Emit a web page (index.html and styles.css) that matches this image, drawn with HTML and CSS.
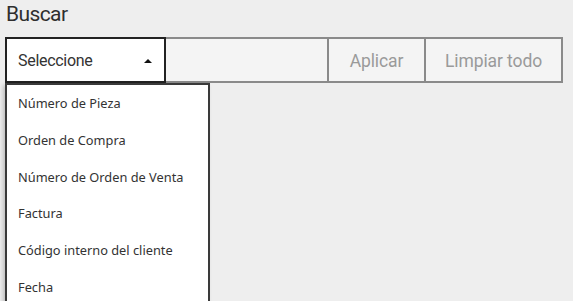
FILE: index.html
```html
<!DOCTYPE html>
<html lang="es">
<head>
<meta charset="utf-8">
<title>Buscar</title>
<link rel="stylesheet" href="styles.css">
</head>
<body>
<div class="page">
  <h1 class="title">Buscar</h1>
  <div class="bar">
    <div class="select-wrap">
      <div class="select">
        <span class="select-label">Seleccione</span>
        <span class="arrow"></span>
      </div>
      <ul class="menu">
        <li>Número de Pieza</li>
        <li>Orden de Compra</li>
        <li>Número de Orden de Venta</li>
        <li>Factura</li>
        <li>Código interno del cliente</li>
        <li>Fecha</li>
      </ul>
    </div>
    <div class="field"></div>
    <button class="btn btn-apply">Aplicar</button>
    <button class="btn btn-clear">Limpiar todo</button>
  </div>
</div>
</body>
</html>
```
FILE: styles.css
```css
html {
  overflow: hidden;
}
body {
  margin: 0;
  padding: 0;
  background: #eeeeee;
  height: 301px;
}
.page {
  padding: 0 0 0 5px;
}
.title {
  margin: 0;
  padding: 2px 0 0 1px;
  height: 34px;
  box-sizing: border-box;
  font-family: Roboto, "Liberation Sans", sans-serif;
  font-weight: 400;
  font-size: 21px;
  letter-spacing: -0.6px;
  color: #2e2e2e;
  line-height: 24px;
}
.bar {
  display: flex;
  height: 46px;
  margin-top: 3px;
}
.select-wrap {
  position: relative;
  width: 161px;
  flex: none;
}
.select {
  box-sizing: border-box;
  height: 46px;
  border: 2px solid #222222;
  background: #ffffff;
  display: flex;
  align-items: center;
  justify-content: space-between;
  padding: 1px 11px 0 11px;
  font-family: Roboto, "Liberation Sans", sans-serif;
  font-size: 16px;
  letter-spacing: -0.3px;
  color: #333333;
}
.arrow {
  width: 0;
  height: 0;
  border-left: 4px solid transparent;
  border-right: 4px solid transparent;
  border-bottom: 4px solid #111111;
  margin-right: 1px;
}
.menu {
  position: absolute;
  top: 46px;
  left: 0;
  width: 205px;
  height: 220px;
  box-sizing: border-box;
  margin: 0;
  padding: 0;
  list-style: none;
  background: #ffffff;
  border: 2px solid #3a3a3a;
  border-bottom: none;
  box-shadow: -2px 2px 4px rgba(0,0,0,0.2);
  z-index: 2;
}
.menu li {
  height: 36.8px;
  line-height: 36.8px;
  padding-left: 11px;
  font-family: "Noto Sans", "Open Sans", sans-serif;
  font-size: 12.8px;
  color: #333333;
  white-space: nowrap;
}
.field {
  width: 161px;
  flex: none;
  box-sizing: border-box;
  background: #f4f4f4;
  border-top: 2px solid #8a8a8a;
  border-bottom: 2px solid #8a8a8a;
}
.btn {
  flex: none;
  box-sizing: border-box;
  height: 46px;
  margin: 0;
  padding: 1px 0 0;
  background: #f4f4f4;
  border: 2px solid #8a8a8a;
  border-right: none;
  font-family: Roboto, "Liberation Sans", sans-serif;
  font-size: 17.5px;
  letter-spacing: -0.1px;
  color: #9a9a9a;
}
.btn-apply {
  width: 97px;
}
.btn-clear {
  width: 139px;
  border-right: 2px solid #8a8a8a;
}
```
